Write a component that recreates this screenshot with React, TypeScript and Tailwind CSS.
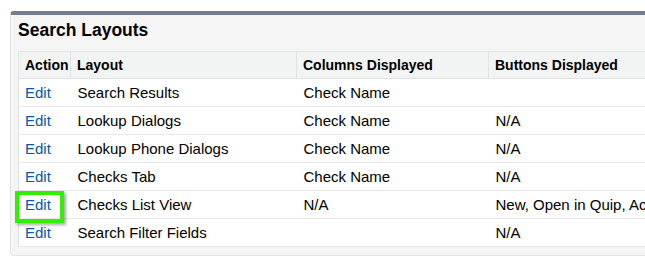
import React from "react";

const rows = [
  { layout: "Search Results", cols: "Check Name", btns: "" },
  { layout: "Lookup Dialogs", cols: "Check Name", btns: "N/A" },
  { layout: "Lookup Phone Dialogs", cols: "Check Name", btns: "N/A" },
  { layout: "Checks Tab", cols: "Check Name", btns: "N/A" },
  { layout: "Checks List View", cols: "N/A", btns: "New, Open in Quip, Accept" },
  { layout: "Search Filter Fields", cols: "", btns: "N/A" },
];

export default function App() {
  return (
    <div
      className="w-[645px] h-[267px] overflow-hidden bg-white pt-[11px] pl-[10px]"
      style={{ fontFamily: '"Liberation Sans", Arial, sans-serif' }}
    >
      <div className="w-[700px] h-[245px] rounded-[4px] border border-[#e3e3e3] border-t-[4px] border-t-[#747c94] bg-[#f5f5f5] pl-[7px] pb-[8px]">
        <div className="h-[36px] flex items-start pt-[7px]">
          <h2 className="text-[17.5px] font-bold text-black leading-none">Search Layouts</h2>
        </div>
        <table className="border-collapse text-[15px] text-black bg-white" style={{ tableLayout: "fixed", width: 700 }}>
          <colgroup>
            <col style={{ width: 52 }} />
            <col style={{ width: 226 }} />
            <col style={{ width: 192 }} />
            <col style={{ width: 230 }} />
          </colgroup>
          <thead>
            <tr className="h-[27px] bg-[#f2f3f3] text-left">
              <th className="border border-[#e0e3e5] pl-[6px] font-bold text-[14px]">Action</th>
              <th className="border border-[#e0e3e5] pl-[6px] font-bold text-[14px]">Layout</th>
              <th className="border border-[#e0e3e5] pl-[6px] font-bold text-[14px]">Columns Displayed</th>
              <th className="border border-[#e0e3e5] pl-[6px] font-bold text-[14px]">Buttons Displayed</th>
            </tr>
          </thead>
          <tbody>
            {rows.map((r, i) => (
              <tr key={i} className="h-[28px] border-b border-[#e8e8e8]">
                <td className="pl-[6px] pt-[2px] border-l border-[#e0e3e5] relative">
                  <span className="text-[#015ba7]">Edit</span>
                  {i === 4 && (
                    <span className="absolute left-[-4px] top-[0px] w-[49px] h-[32px] border-[4px] border-[#33ee00] shadow-[2px_2px_3px_rgba(0,0,0,0.35)]" />
                  )}
                </td>
                <td className="pl-[7px] pt-[2px] whitespace-nowrap">{r.layout}</td>
                <td className="pl-[7px] pt-[2px] whitespace-nowrap">{r.cols}</td>
                <td className="pl-[7px] pt-[2px] whitespace-nowrap overflow-hidden">{r.btns}</td>
              </tr>
            ))}
          </tbody>
        </table>
      </div>
    </div>
  );
}
